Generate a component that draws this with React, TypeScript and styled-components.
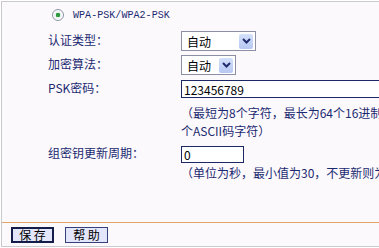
import React, { useState } from 'react'
import styled, { createGlobalStyle } from 'styled-components'

const GlobalStyle = createGlobalStyle`
  html, body {
    margin: 0;
    padding: 0;
    background: #ffffff;
  }
  body {
    font-family: "Noto Sans CJK SC", "Liberation Sans", sans-serif;
    font-size: 12px;
  }
`

export default function App(): JSX.Element {
  const [psk, setPsk] = useState('123456789')
  const [interval, setInterval] = useState('0')

  return (
    <>
      <GlobalStyle />
      <Page>
        <Main>
          {/* 安全模式 */}
          <RadioRow>
            <Radio />
            <RadioText>WPA-PSK/WPA2-PSK</RadioText>
          </RadioRow>

          {/* 认证类型 */}
          <Row>
            <Label>认证类型：</Label>
            <Select $width={75}>
              <SelectText>自动</SelectText>
              <Arrow />
            </Select>
          </Row>

          {/* 加密算法 */}
          <Row>
            <Label>加密算法：</Label>
            <Select $width={55}>
              <SelectText>自动</SelectText>
              <Arrow />
            </Select>
          </Row>

          {/* PSK密码 */}
          <Row>
            <Label>PSK密码：</Label>
            <TextInput
              $width={230}
              $height={18}
              value={psk}
              onChange={(e) => setPsk(e.target.value)}
            />
          </Row>
          <Hint $lines={2}>
            （最短为8个字符，最长为64个16进制字符或63个ASCII码字符）
          </Hint>

          {/* 组密钥更新周期 */}
          <Row $height={20} $top={4}>
            <Label>组密钥更新周期：</Label>
            <TextInput
              $width={63}
              $height={17}
              value={interval}
              onChange={(e) => setInterval(e.target.value)}
            />
          </Row>
          <Hint $lines={1}>（单位为秒，最小值为30，不更新则为0）</Hint>
        </Main>

        <Footer>
          <Button $primary type="button">
            保 存
          </Button>
          <Button type="button">帮 助</Button>
        </Footer>
      </Page>
    </>
  )
}

function Arrow(): JSX.Element {
  return (
    <ArrowBox>
      <svg width="9" height="6" viewBox="0 0 9 6">
        <path d="M1 1 L4.5 4.5 L8 1" fill="none" stroke="#1f2d6e" strokeWidth="2" />
      </svg>
    </ArrowBox>
  )
}

const Page = styled.div`
  box-sizing: border-box;
  margin: 1px 0 0 1px;
  width: 378px;
  height: 246px;
  border-top: 1px solid #c9c9cf;
  border-left: 1px solid #c9c9cf;
  border-bottom: 1px solid #c9c9cf;
  background: #fcf9fd;
  display: flex;
  flex-direction: column;
  overflow: hidden;
`

const Main = styled.div`
  flex: 1;
  display: flex;
  flex-direction: column;
  padding: 4px 0 0 46px;
`

const RadioRow = styled.div`
  display: flex;
  align-items: center;
  height: 18px;
  margin-bottom: 5px;
  padding-left: 4px;
`

const Radio = styled.span`
  box-sizing: border-box;
  width: 12px;
  height: 12px;
  border-radius: 50%;
  border: 1px solid #8d93a6;
  background: radial-gradient(circle, #2f9a3c 0 2px, #e9eef0 2.5px, #ffffff 5px);
  margin-right: 9px;
`

const RadioText = styled.span`
  font-family: "Liberation Mono", "DejaVu Sans Mono", monospace;
  font-size: 10px;
  color: #1b2a70;
  letter-spacing: 0.05px;
`

const Row = styled.div<{ $height?: number; $top?: number }>`
  display: grid;
  grid-template-columns: 133px max-content;
  align-items: center;
  height: ${(p) => p.$height ?? 24}px;
  margin-top: ${(p) => p.$top ?? 0}px;
`

const Label = styled.span`
  color: #1b2a70;
  line-height: 16px;
  margin-top: -2px;
`

const Select = styled.div<{ $width: number }>`
  box-sizing: border-box;
  width: ${(p) => p.$width}px;
  height: 20px;
  border: 1px solid #8c8fa4;
  background: #ffffff;
  display: flex;
  align-items: center;
  justify-content: space-between;
  padding: 0 2px 0 5px;
`

const SelectText = styled.span`
  color: #000000;
  font-size: 12px;
`

const ArrowBox = styled.span`
  width: 14px;
  height: 15px;
  display: flex;
  align-items: center;
  justify-content: center;
  background: linear-gradient(#d4e0fb, #b6c8f2);
  border-radius: 2px;
`

const TextInput = styled.input<{ $width: number; $height: number }>`
  box-sizing: border-box;
  width: ${(p) => p.$width}px;
  height: ${(p) => p.$height}px;
  border: 1px solid #1c2766;
  background: #ffffff;
  font-family: "Noto Sans CJK SC", "Liberation Sans", sans-serif;
  font-size: 12px;
  color: #000000;
  padding: 0 2px;
  outline: none;
`

const Hint = styled.div<{ $lines: number }>`
  margin-left: 133px;
  width: 256px;
  color: #1b2a70;
  line-height: 18px;
  padding-top: ${(p) => (p.$lines > 1 ? 3 : 0)}px;
  white-space: ${(p) => (p.$lines > 1 ? 'normal' : 'nowrap')};
`

const Footer = styled.div`
  display: flex;
  align-items: flex-start;
  gap: 11px;
  height: 24px;
  box-sizing: border-box;
  border-top: 1px solid #e3a468;
  padding: 4px 0 0 9px;
`

const Button = styled.button<{ $primary?: boolean }>`
  box-sizing: border-box;
  width: 43px;
  height: 16px;
  padding: 0;
  border: ${(p) => (p.$primary ? '2px solid #141c4a' : '1px solid #34407e')};
  background: #e3e5fa;
  color: #000000;
  font-family: "Noto Sans CJK SC", "Liberation Sans", sans-serif;
  font-size: 12px;
  line-height: 12px;
  cursor: pointer;
`
